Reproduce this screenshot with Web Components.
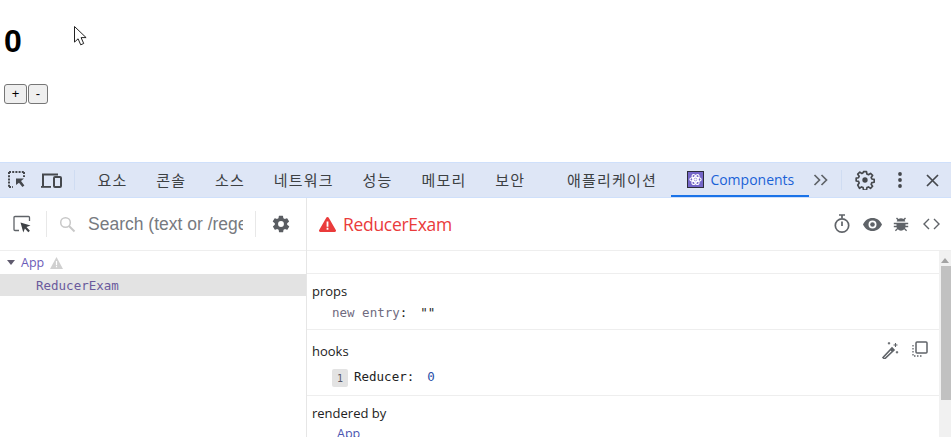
<!DOCTYPE html>
<html lang="ko">
<head>
<meta charset="utf-8">
<title>ReducerExam</title>
<style>
    html, body { margin: 0; height: 100%; overflow: hidden; background: #fff; }
    body { display: flex; flex-direction: column; font-family: "Open Sans", "Noto Sans CJK KR", sans-serif; }
</style>
</head>
<body>
<counter-page></counter-page>
<dev-tools></dev-tools>

<script>
const icon = (w, h, box, body) => `<svg width="${w}" height="${h}" viewBox="${box}" aria-hidden="true">${body}</svg>`;

class CounterPage extends HTMLElement {
    constructor() {
        super();
        this.attachShadow({ mode: 'open' });
        this.shadowRoot.innerHTML = `
            <style>
                :host { display: block; position: relative; height: 162px; box-sizing: border-box; padding: 23px 4px 0; flex: none; }
                h1 { margin: 0; font: bold 32px/36px "Liberation Sans", sans-serif; color: #000; }
                .btns { display: flex; gap: 1px; margin-top: 25px; }
                button {
                    height: 20px; padding: 0; box-sizing: border-box;
                    border: 1px solid #767676; border-radius: 3px; background: #efefef; color: #000;
                    font: 13px/16px "Liberation Sans", sans-serif;
                }
                .plus { width: 23px; }
                .minus { width: 20px; }
                .cursor { position: absolute; left: 74px; top: 26px; }
            </style>
            <h1 id="count">0</h1>
            <div class="btns">
                <button class="plus">+</button>
                <button class="minus">-</button>
            </div>
            <svg class="cursor" width="14" height="20" viewBox="0 0 14 20">
                <path d="M.5.5v15.6l3.6-3.3 2.6 6 3-1.3-2.6-5.9h5z" fill="#fff" stroke="#222" stroke-width="1"/>
            </svg>
        `;
    }
}

class DevTab extends HTMLElement {
    constructor() {
        super();
        this.attachShadow({ mode: 'open' });
        this.shadowRoot.innerHTML = `
            <style>
                :host {
                    display: flex; align-items: center; justify-content: center; gap: 6px; box-sizing: border-box;
                    height: 34px; padding: 0 14.4px 2px; color: #3c4043; flex: none; white-space: nowrap;
                    font: 15px "Noto Sans CJK KR", sans-serif; letter-spacing: 1.2px;
                }
                :host([selected]) {
                    color: #1a62d6; border-bottom: 2px solid #1a73e8; padding: 0 15px 0 16px;
                    font: 14px "Open Sans", sans-serif; letter-spacing: 0;
                }
            </style>
            <slot></slot>
        `;
    }
}

class DevToolbar extends HTMLElement {
    constructor() {
        super();
        this.attachShadow({ mode: 'open' });
        const ink = '#45484d';
        this.shadowRoot.innerHTML = `
            <style>
                :host {
                    display: flex; align-items: center; height: 36px; box-sizing: border-box; flex: none;
                    background: #dee6f6; border-top: 1px solid #cfe0fb; border-bottom: 1px solid #cfe0fb;
                }
                .ic { display: flex; flex: none; }
                .sep { width: 1px; height: 20px; background: #cfdcf2; flex: none; }
                .react { display: flex; }
            </style>
            <span class="ic" style="margin-left:7px">${icon(20, 20, '0 0 20 20', `
                <path d="M2 2h15M2 2v15M2 17h4M17 2v5" fill="none" stroke="${ink}" stroke-width="2" stroke-dasharray="2 1.2"/>
                <path d="M9 8.5h8l-3 2.6 3.4 4.4-2 1.6-3.4-4.4-3 2.4z" fill="${ink}"/>`)}
            </span>
            <span class="ic" style="margin-left:14px">${icon(22, 18, '0 0 22 18', `
                <path d="M2 15V3.5h15" fill="none" stroke="${ink}" stroke-width="2"/>
                <path d="M0 15h10v1.8H0z" fill="${ink}"/>
                <rect x="13" y="6" width="7" height="10" rx="1" fill="none" stroke="${ink}" stroke-width="2"/>`)}
            </span>
            <span class="sep" style="margin-left:11px"></span>
            <dev-tab style="margin-left:8px">요소</dev-tab>
            <dev-tab>콘솔</dev-tab>
            <dev-tab>소스</dev-tab>
            <dev-tab>네트워크</dev-tab>
            <dev-tab>성능</dev-tab>
            <dev-tab>메모리</dev-tab>
            <dev-tab>보안</dev-tab>
            <dev-tab style="margin-left:13px">애플리케이션</dev-tab>
            <dev-tab selected>
                <span class="react">${icon(17, 17, '0 0 17 17', `
                    <rect x=".5" y=".5" width="16" height="16" fill="#7466c9" stroke="#2c2c3c"/>
                    <g fill="none" stroke="#fff" stroke-width="1.1">
                        <ellipse cx="8.5" cy="8.5" rx="5.6" ry="2.2"/>
                        <ellipse cx="8.5" cy="8.5" rx="5.6" ry="2.2" transform="rotate(60 8.5 8.5)"/>
                        <ellipse cx="8.5" cy="8.5" rx="5.6" ry="2.2" transform="rotate(120 8.5 8.5)"/>
                    </g>
                    <circle cx="8.5" cy="8.5" r="1.3" fill="#fff"/>`)}
                </span>
                Components
            </dev-tab>
            <span class="ic" style="margin-left:4px">${icon(16, 12, '0 0 16 12', `
                <path d="M1.500 1l5 5-5 5M8.500 1l5 5-5 5" fill="none" stroke="#5f6368" stroke-width="1.700"/>`)}
            </span>
            <span class="sep" style="margin-left:12px"></span>
            <span class="ic" style="margin-left:13px">${icon(20, 20, '0 0 24 24', `
                <path d="M10.200 2h3.600l.5 2.900 1.900.8 2.400-1.700 2.500 2.500-1.700 2.400.8 1.900 2.800.5v3.400l-2.800.5-.8 1.900 1.700 2.400-2.500 2.500-2.400-1.700-1.900.8-.5 2.900h-3.600l-.5-2.900-1.900-.8-2.400 1.700L3.300 18l1.700-2.400-.8-1.900-2.800-.5V9.800l2.800-.5.8-1.900L3.300 5l2.500-2.500 2.400 1.700 1.500-.8z" fill="none" stroke="${ink}" stroke-width="2" stroke-linejoin="round"/>
                <circle cx="12" cy="12" r="3.200" fill="${ink}"/>`)}
            </span>
            <span class="ic" style="margin-left:23px">${icon(4, 16, '0 0 4 16', `
                <circle cx="2" cy="2" r="1.900" fill="${ink}"/><circle cx="2" cy="8" r="1.900" fill="${ink}"/><circle cx="2" cy="14" r="1.900" fill="${ink}"/>`)}
            </span>
            <span class="ic" style="margin-left:24px">${icon(13, 13, '0 0 13 13', `
                <path d="M1 1l11 11M12 1L1 12" stroke="${ink}" stroke-width="1.700"/>`)}
            </span>
        `;
    }
}

class TreeRow extends HTMLElement {
    constructor() {
        super();
        this.attachShadow({ mode: 'open' });
        this.shadowRoot.innerHTML = `
            <style>
                :host {
                    display: flex; align-items: center; box-sizing: border-box; height: 23px;
                    color: #6a51b2; font: 13px/23px "DejaVu Sans Mono", monospace;
                }
                :host([selected]) { background: #e3e3e3; height: 22px; }
            </style>
            <slot></slot>
        `;
    }
}

class TreePanel extends HTMLElement {
    constructor() {
        super();
        this.attachShadow({ mode: 'open' });
        const grey = '#5f6368';
        this.shadowRoot.innerHTML = `
            <style>
                :host { display: flex; flex-direction: column; width: 307px; flex: none; box-sizing: border-box; border-right: 1px solid #e6e6e6; }
                .bar { display: flex; align-items: center; height: 53px; flex: none; box-sizing: border-box; border-bottom: 1px solid #eee; }
                .ic { display: flex; flex: none; }
                .sep { width: 1px; height: 26px; background: #e8e8e8; flex: none; }
                .search {
                    width: 155px; margin-left: 12px; overflow: hidden; white-space: nowrap; flex: none;
                    color: #777a80; font: 17.5px "Liberation Sans", sans-serif;
                }
                .app { font: 12.5px "Open Sans", sans-serif; color: #6b5bb8; }
                .caret { margin: 0 6px 0 7px; display: flex; }
                .warn { margin-left: 6px; display: flex; }
                .name { margin-left: 36px; font-size: 12.5px; color: #6a5a9c; }
            </style>
            <div class="bar">
                <span class="ic" style="margin-left:13px">${icon(18, 18, '0 0 18 18', `
                    <path d="M6 15.500H2a1 1 0 0 1-1-1v-12a1 1 0 0 1 1-1h13.500a1 1 0 0 1 1 1V6" fill="none" stroke="${grey}" stroke-width="1.300"/>
                    <path d="M7.500 7.500l10 3-4 1.600 3.400 3.600-1.600 1.500-3.400-3.600-1.600 4z" fill="#3f4246"/>`)}
                </span>
                <span class="sep" style="margin-left:15px"></span>
                <span class="ic" style="margin-left:12px">${icon(17, 17, '0 0 17 17', `
                    <circle cx="6.500" cy="6.500" r="4.800" fill="none" stroke="#c8c8c8" stroke-width="1.500"/>
                    <path d="M10 10l5.500 5.500" stroke="#c8c8c8" stroke-width="2"/>`)}
                </span>
                <span class="search">Search (text or /regex/)</span>
                <span class="sep" style="margin-left:12px"></span>
                <span class="ic" style="margin-left:15px">${icon(20, 20, '0 0 24 24', `
                    <path fill="#5a5d62" d="M19.400 13a7.600 7.600 0 0 0 0-2l2.100-1.600a.5.5 0 0 0 .1-.6l-2-3.500a.5.5 0 0 0-.6-.2l-2.500 1a7.300 7.300 0 0 0-1.700-1l-.4-2.700a.5.5 0 0 0-.5-.4h-4a.5.5 0 0 0-.5.4l-.4 2.700a7.600 7.600 0 0 0-1.700 1l-2.500-1a.5.5 0 0 0-.6.2l-2 3.500a.5.5 0 0 0 .1.6L4.600 11a7.900 7.900 0 0 0 0 2l-2.100 1.600a.5.5 0 0 0-.1.6l2 3.500c.1.2.4.3.6.2l2.500-1c.5.4 1.100.8 1.700 1l.4 2.700c0 .2.2.4.5.4h4c.3 0 .5-.2.5-.4l.4-2.700c.6-.2 1.200-.6 1.700-1l2.500 1c.2.1.5 0 .6-.2l2-3.500a.5.5 0 0 0-.1-.6zM12 15.500a3.500 3.500 0 1 1 0-7 3.500 3.500 0 0 1 0 7z"/>`)}
                </span>
            </div>
            <tree-row class="app">
                <span class="caret">${icon(8, 5, '0 0 8 5', `<path d="M0 0h8L4 5z" fill="#5f5a6e"/>`)}</span>
                App
                <span class="warn">${icon(13, 12, '0 0 13 12', `
                    <path d="M6.500 0L13 12H0z" fill="#d0d0d0"/><path d="M5.900 4h1.200v4.200H5.900zM5.900 9h1.200v1.200H5.900z" fill="#fff"/>`)}
                </span>
            </tree-row>
            <tree-row selected><span class="name">ReducerExam</span></tree-row>
        `;
    }
}

class InspectorSection extends HTMLElement {
    constructor() {
        super();
        this.attachShadow({ mode: 'open' });
        this.shadowRoot.innerHTML = `
            <style>
                :host {
                    display: block; position: relative; box-sizing: border-box; padding: 7px 0 0 5px;
                    border-bottom: 1px solid #eee; color: #222;
                    font: 13px/20px "Open Sans", sans-serif;
                }
                ::slotted([slot=actions]) { position: absolute; right: 11px; top: 11px; }
            </style>
            <div><slot name="title"></slot></div>
            <slot></slot>
            <slot name="actions"></slot>
        `;
    }
}

class InspectorPanel extends HTMLElement {
    constructor() {
        super();
        this.attachShadow({ mode: 'open' });
        const ink = '#5f6368';
        this.shadowRoot.innerHTML = `
            <style>
                :host { display: flex; flex-direction: column; flex: 1; min-width: 0; }
                .head { display: flex; align-items: center; height: 53px; flex: none; box-sizing: border-box; border-bottom: 1px solid #eee; padding: 0 11px 0 12px; }
                .title { margin-left: 7px; margin-bottom: 1px; color: #ea3b3b; font: 17.5px "Open Sans", sans-serif; letter-spacing: -.3px; flex: 1; }
                .ic { display: flex; flex: none; }
                .body { display: flex; flex: 1; min-height: 0; overflow: hidden; }
                .list { flex: 1; min-width: 0; }
                .blank { height: 23px; box-sizing: border-box; border-bottom: 1px solid #eee; }
                .scroll { width: 12px; flex: none; background: #f1f1f1; position: relative; display: flex; flex-direction: column; align-items: center; }
                .arrow { margin-top: 7px; display: flex; }
                .thumb { width: 10px; height: 134px; margin-top: 3px; margin-left: 1px; background: #c1c1c1; }
                .row { font: 12.5px/20px "DejaVu Sans Mono", monospace; white-space: nowrap; color: #222; }
                .props { height: 56px; }
                .hooks { height: 66px; padding-top: 11px; }
                .rendered { height: 60px; }
                .key { color: #6f6b80; }
                .str { color: #222; margin-left: 13px; }
                .num { color: #2a4fa8; margin-left: 13px; }
                .badge {
                    display: inline-block; width: 16px; height: 18px; border-radius: 2px; background: #e3e3e3;
                    color: #5b5b6b; font-size: 10px; line-height: 19px; text-align: center; margin-right: 6px; vertical-align: -1px;
                }
                .owner { padding-left: 25px; padding-top: 1px; color: #4a54b0; font: 12.5px/20px "Open Sans", sans-serif; }
                .acts { display: flex; gap: 13px; }
            </style>
            <div class="head">
                ${icon(17, 15, '0 0 17 15', `
                    <path d="M8.500 0a1.300 1.300 0 0 1 1.100.6l7.200 12.400a1.300 1.300 0 0 1-1.100 2H1.300A1.300 1.300 0 0 1 .2 13L7.400.6A1.300 1.300 0 0 1 8.500 0z" fill="#ea3b3b"/>
                    <path d="M7.600 4.500h1.800v5.200H7.600zM7.600 10.800h1.800v1.900H7.600z" fill="#fff"/>`)}
                <span class="title">ReducerExam</span>
                <span class="ic" style="margin-right:2px">${icon(18, 20, '0 0 18 20', `
                    <path d="M6 1h6M9 1v3" stroke="${ink}" stroke-width="1.700" fill="none"/>
                    <circle cx="9" cy="11.500" r="6.700" fill="none" stroke="${ink}" stroke-width="1.700"/>
                    <path d="M9 7.500v4.500" stroke="${ink}" stroke-width="1.700"/>`)}
                </span>
                <span class="ic" style="margin-left:10px">${icon(19, 13, '0 0 19 13', `
                    <path fill-rule="evenodd" fill="${ink}" d="M9.500 0C5.200 0 1.600 2.700 0 6.500 1.600 10.300 5.200 13 9.500 13S17.400 10.300 19 6.500C17.400 2.700 13.800 0 9.500 0zm0 10.500a4 4 0 1 1 0-8 4 4 0 0 1 0 8z"/>
                    <circle cx="9.500" cy="6.500" r="2.300" fill="${ink}"/>`)}
                </span>
                <span class="ic" style="margin-left:11px">${icon(16, 16, '0 0 16 16', `
                    <path fill="${ink}" d="M8 2.200c-1 0-1.800.3-2.500.8L4 1.500 3 2.500 4.400 4C4 4.500 3.800 5 3.700 5.500h8.600c-.1-.5-.3-1-.7-1.500L13 2.500l-1-1L10.500 3C9.800 2.500 9 2.200 8 2.200z"/>
                    <path fill="${ink}" d="M3.500 6.800H.8v1.500h2.700v1.400H.8v1.500h2.800c.1.400.2.700.4 1L1.900 14.300l1 1L4.800 13.300c.8.800 2 1.400 3.200 1.400s2.400-.6 3.200-1.400l1.900 2 1-1L12 12.200c.2-.3.300-.6.400-1h2.800V9.700h-2.700V8.300h2.700V6.800h-2.700z"/>`)}
                </span>
                <span class="ic" style="margin-left:14px">${icon(17, 12, '0 0 17 12', `
                    <path d="M6 1L1 6l5 5M11 1l5 5-5 5" fill="none" stroke="${ink}" stroke-width="1.400"/>`)}
                </span>
            </div>
            <div class="body">
                <div class="list">
                    <div class="blank"></div>
                    <inspector-section class="props">
                        <span slot="title">props</span>
                        <div class="row" style="padding-left:20px;margin-top:2px"><span class="key">new entry</span>:<span class="str">""</span></div>
                    </inspector-section>
                    <inspector-section class="hooks">
                        <span slot="title">hooks</span>
                        <div class="row" style="padding-left:20px;margin-top:6px"><span class="badge">1</span>Reducer:<span class="num">0</span></div>
                        <span slot="actions" class="acts">
                            <span class="ic">${icon(18, 18, '0 0 18 18', `
                                <path d="M2 16.500L11 7l2 2-9.500 9z" fill="none" stroke="${ink}" stroke-width="1.600"/>
                                <path d="M10 8l2 2" stroke="${ink}" stroke-width="2.500"/>
                                <path d="M14.500 2v4M12.500 4h4M8 1v2.400M6.800 2.200h2.400M16 10v2.400M14.800 11.200h2.400" stroke="${ink}" stroke-width="1.100"/>`)}
                            </span>
                            <span class="ic">${icon(16, 16, '0 0 16 16', `
                                <rect x="4" y="1" width="11" height="11" rx="1" fill="none" stroke="${ink}" stroke-width="1.500"/>
                                <path d="M1 4v11h10" fill="none" stroke="${ink}" stroke-width="1.300" stroke-dasharray="1.500 1.500"/>`)}
                            </span>
                        </span>
                    </inspector-section>
                    <inspector-section class="rendered">
                        <span slot="title">rendered by</span>
                        <div class="owner">App</div>
                    </inspector-section>
                </div>
                <div class="scroll">
                    <span class="arrow">${icon(8, 5, '0 0 8 5', `<path d="M4 0l4 5H0z" fill="#a3a3a3"/>`)}</span>
                    <div class="thumb"></div>
                </div>
            </div>
        `;
    }
}

class DevTools extends HTMLElement {
    constructor() {
        super();
        this.attachShadow({ mode: 'open' });
        this.shadowRoot.innerHTML = `
            <style>
                :host { display: flex; flex-direction: column; flex: 1; min-height: 0; overflow: hidden; }
                .split { display: flex; flex: 1; min-height: 0; }
            </style>
            <dev-toolbar></dev-toolbar>
            <div class="split">
                <tree-panel></tree-panel>
                <inspector-panel></inspector-panel>
            </div>
        `;
    }
}

customElements.define('counter-page', CounterPage);
customElements.define('dev-tab', DevTab);
customElements.define('dev-toolbar', DevToolbar);
customElements.define('tree-row', TreeRow);
customElements.define('tree-panel', TreePanel);
customElements.define('inspector-section', InspectorSection);
customElements.define('inspector-panel', InspectorPanel);
customElements.define('dev-tools', DevTools);
</script>
</body>
</html>
